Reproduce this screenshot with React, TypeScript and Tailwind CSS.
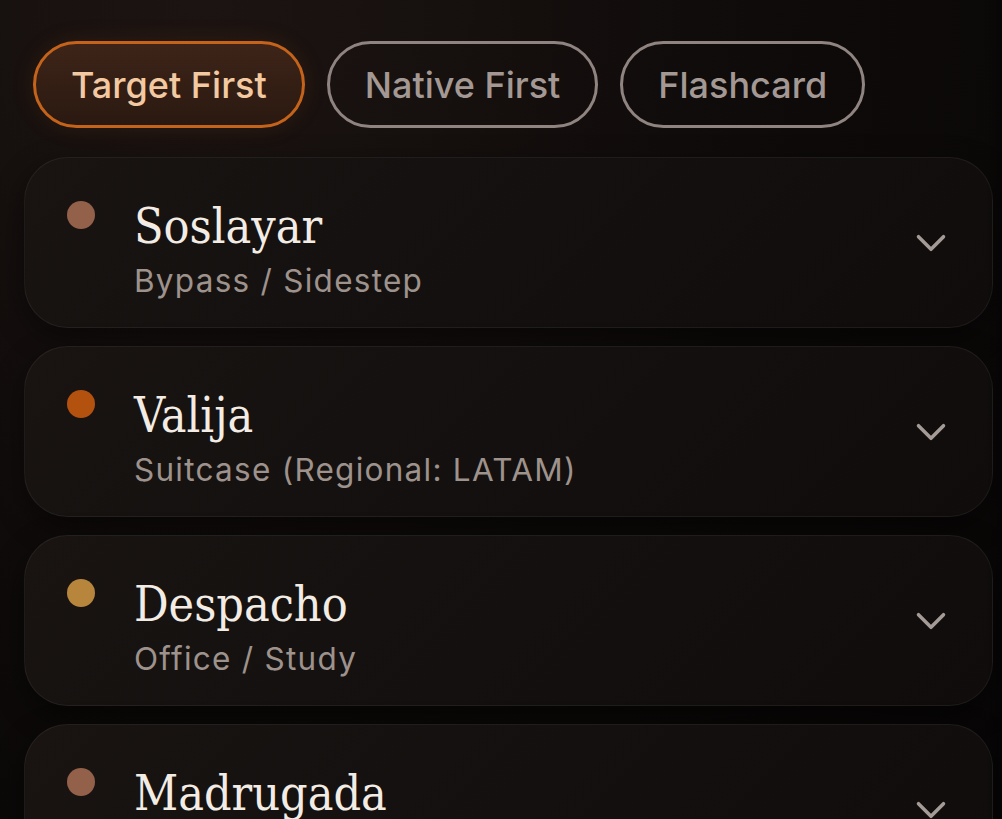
import { ChevronDown } from "lucide-react";

type Word = {
  term: string;
  meaning: string;
  dot: string;
};

const WORDS: Word[] = [
  { term: "Soslayar", meaning: "Bypass / Sidestep", dot: "bg-[#93604a]" },
  { term: "Valija", meaning: "Suitcase (Regional: LATAM)", dot: "bg-[#b3520f]" },
  { term: "Despacho", meaning: "Office / Study", dot: "bg-[#b7863c]" },
  { term: "Madrugada", meaning: "Early morning / Dawn", dot: "bg-[#93604a]" },
];

const MODES = ["Target First", "Native First", "Flashcard"];

export default function App() {
  return (
    <div className="relative h-[819px] w-[1002px] overflow-hidden bg-[radial-gradient(ellipse_at_20%_0%,#1c1412_0%,#0d0a09_55%,#080606_100%)] font-['Inter','Liberation_Sans',sans-serif]">
      {/* ── Mode chips ── */}
      <div className="flex gap-[22px] pl-[33px] pt-[41px]">
        {MODES.map((mode, i) => (
          <button
            key={mode}
            className={
              i === 0
                ? "h-[87px] rounded-full border-[3px] border-[#c5631b] bg-[linear-gradient(180deg,#3e2418_0%,#2a1911_100%)] px-[35px] text-[36px] font-medium text-[#f2c9a1] shadow-[0_0_24px_rgba(197,99,27,0.12)]"
                : "h-[87px] rounded-full border-[3px] border-[#8f8480] bg-transparent px-[35px] text-[36px] font-medium text-[#a39893]"
            }
          >
            {mode}
          </button>
        ))}
      </div>

      {/* ── Word cards ── */}
      <div className="mt-[29px] flex flex-col gap-[18px] pl-[24px] pr-[9px]">
        {WORDS.map((w) => (
          <div
            key={w.term}
            className="flex items-center rounded-[44px] border-[1.5px] border-[rgba(255,255,255,0.06)] bg-[linear-gradient(135deg,#191412_0%,#13100f_50%,#0f0c0b_100%)] pb-[26px] pl-[42px] pr-[36px] pt-[40px] shadow-[0_10px_30px_rgba(0,0,0,0.45)]"
          >
            <div className="flex flex-1 items-start gap-[39px]">
              <span className={`mt-[3px] h-[28px] w-[28px] shrink-0 rounded-full ${w.dot}`} />
              <div className="flex flex-col gap-[7px]">
                <span className="font-['DejaVu_Serif_Condensed','DejaVu_Serif',serif] text-[48px] leading-[56px] text-[#f3ece4] [font-stretch:condensed]">
                  {w.term}
                </span>
                <span className="text-[31.5px] leading-[40px] tracking-[0.04em] text-[#9e928c]">
                  {w.meaning}
                </span>
              </div>
            </div>
            <ChevronDown size={50} strokeWidth={1.7} className="-mt-[14px] shrink-0 text-[#a59b96]" />
          </div>
        ))}
      </div>

      {/* right edge shade */}
      <div className="pointer-events-none absolute inset-y-0 right-0 w-[16px] bg-[linear-gradient(90deg,rgba(0,0,0,0)_0%,rgba(0,0,0,0.35)_100%)]" />
    </div>
  );
}
